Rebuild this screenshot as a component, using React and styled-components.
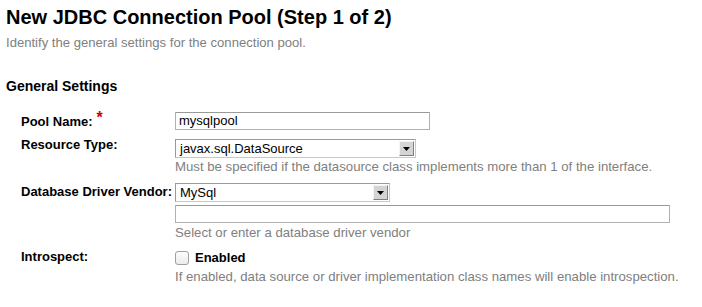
import React from "react";
import styled, { createGlobalStyle } from "styled-components";

const Global = createGlobalStyle`
  html, body { margin: 0; padding: 0; background: #fff; }
  body { font-family: "Liberation Sans", Arial, sans-serif; color: #000; }
`;

const Page = styled.div`
  padding: 5px 6px 0 6px;
`;

const Title = styled.h1`
  margin: 0;
  font-size: 20px;
  line-height: 24px;
  font-weight: bold;
`;

const Subtitle = styled.div`
  margin-top: 6px;
  font-size: 13.1px;
  line-height: 16px;
  color: #808080;
`;

const Section = styled.h2`
  margin: 27px 0 0 0;
  font-size: 14px;
  line-height: 17px;
  font-weight: bold;
`;

const Form = styled.div`
  margin-top: 17px;
  padding-left: 15px;
  display: flex;
  flex-direction: column;
`;

const Row = styled.div`
  display: grid;
  grid-template-columns: 154px 1fr;
  margin-bottom: ${(p) => p.$mb || 0}px;
`;

const Label = styled.div`
  font-size: 13px;
  font-weight: bold;
  line-height: 16px;
  margin-top: ${(p) => p.$mt || 0}px;
`;

const Req = styled.span`
  color: #c00;
  font-size: 16px;
  position: relative;
  top: -3px;
  margin-left: 4px;
`;

const Field = styled.div`
  display: flex;
  flex-direction: column;
  align-items: flex-start;
`;

const TextBox = styled.div`
  box-sizing: border-box;
  width: ${(p) => p.$w}px;
  height: 18px;
  border: 1px solid #b0b0b0;
  border-top-color: #9a9a9a;
  background: #fff;
  font-size: 13px;
  line-height: 16px;
  padding: 0 3px;
  margin-top: ${(p) => p.$mt || 0}px;
`;

const Select = styled.div`
  box-sizing: border-box;
  width: ${(p) => p.$w}px;
  height: 19px;
  border: 1px solid #9a9a9a;
  border-bottom-color: #c8c8c8;
  border-right-color: #c8c8c8;
  background: #fff;
  display: flex;
  align-items: stretch;
  margin-top: ${(p) => p.$mt || 0}px;
`;

const SelectText = styled.div`
  flex: 1;
  font-size: 13px;
  line-height: 17px;
  padding-left: 4px;
`;

const SelectButton = styled.div`
  width: 15px;
  margin: 1px;
  box-sizing: border-box;
  background: #d4d4d4;
  border: 1px solid;
  border-color: #f4f4f4 #808080 #808080 #f4f4f4;
  display: flex;
  align-items: center;
  justify-content: center;
`;

const Help = styled.div`
  font-size: 13.2px;
  line-height: 16px;
  color: #808080;
  margin-top: ${(p) => p.$mt || 0}px;
`;

const CheckLine = styled.div`
  display: flex;
  align-items: center;
  gap: 6px;
  padding-top: 2px;
`;

const Box = styled.span`
  box-sizing: border-box;
  width: 14px;
  height: 14px;
  border: 1px solid #a0a0a0;
  border-radius: 3px;
  background: linear-gradient(#fdfdfd, #ececec);
`;

const CheckLabel = styled.span`
  font-size: 13px;
  font-weight: bold;
  line-height: 16px;
`;

const Arrow = () => (
  <svg width="7" height="4" viewBox="0 0 7 4">
    <path d="M0 0h7L3.5 4z" fill="#000" />
  </svg>
);

const FakeSelect = ({ w, value, mt }) => (
  <Select $w={w} $mt={mt} role="combobox">
    <SelectText>{value}</SelectText>
    <SelectButton>
      <Arrow />
    </SelectButton>
  </Select>
);

export default function App() {
  return (
    <>
      <Global />
      <Page>
        <Title>New JDBC Connection Pool (Step 1 of 2)</Title>
        <Subtitle>Identify the general settings for the connection pool.</Subtitle>
        <Section>General Settings</Section>
        <Form>
          <Row $mb={9}>
            <Label $mt={1}>
              Pool Name:<Req>*</Req>
            </Label>
            <Field>
              <TextBox $w={255}>mysqlpool</TextBox>
            </Field>
          </Row>
          <Row $mb={8}>
            <Label $mt={-2}>Resource Type:</Label>
            <Field>
              <FakeSelect w={241} value="javax.sql.DataSource" />
              <Help $mt={1}>
                Must be specified if the datasource class implements more than 1 of the interface.
              </Help>
            </Field>
          </Row>
          <Row $mb={7}>
            <Label $mt={1}>Database Driver Vendor:</Label>
            <Field>
              <FakeSelect w={215} value="MySql" />
              <TextBox $w={495} $mt={3} />
              <Help $mt={2}>Select or enter a database driver vendor</Help>
            </Field>
          </Row>
          <Row>
            <Label $mt={1}>Introspect:</Label>
            <Field>
              <CheckLine>
                <Box />
                <CheckLabel>Enabled</CheckLabel>
              </CheckLine>
              <Help $mt={3}>
                If enabled, data source or driver implementation class names will enable introspection.
              </Help>
            </Field>
          </Row>
        </Form>
      </Page>
    </>
  );
}
